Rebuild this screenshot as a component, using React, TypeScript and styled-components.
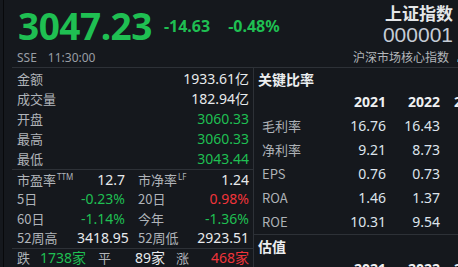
import React from "react";
import styled, { createGlobalStyle } from "styled-components";

const GlobalStyle = createGlobalStyle`
  html, body { margin: 0; padding: 0; background: #15181d; }
  body { font-family: "Noto Sans", "Noto Sans CJK SC", sans-serif; }
  * { box-sizing: border-box; }
`;

const GREEN = "#1fbf52";
const RED = "#f0343a";
const LINE = "#2d3137";

const Page = styled.div`
  width: 458px;
  height: 267px;
  overflow: hidden;
  background: #15181d;
  padding-left: 3px;
`;

const Frame = styled.div`
  height: 100%;
  border-left: 1px solid #08090b;
  padding-left: 8px;
  display: flex;
  flex-direction: column;
`;

const Header = styled.header`
  height: 68px;
  flex: none;
  border-bottom: 1px solid ${LINE};
  display: grid;
  grid-template-columns: 1fr auto;
  grid-template-rows: 48px 1fr;
`;

const PriceRow = styled.div`
  display: flex;
  align-items: center;
  padding: 4px 0 0 6px;
  gap: 12px;
`;

const Price = styled.span`
  font-family: "Noto Sans", sans-serif;
  font-weight: 700;
  font-size: 37px;
  letter-spacing: -0.5px;
  color: ${GREEN};
  line-height: 38px;
`;

const Change = styled.span<{ $gap?: number }>`
  font-weight: 700;
  font-size: 16px;
  line-height: 18px;
  color: ${GREEN};
  margin-left: ${(p) => p.$gap ?? 0}px;
`;

const TitleBlock = styled.div`
  display: flex;
  flex-direction: column;
  align-items: flex-end;
  padding: 3px 5px 0 0;
`;

const IndexName = styled.div`
  font-family: "Noto Sans CJK SC", sans-serif;
  font-weight: 700;
  font-size: 17px;
  line-height: 20px;
  color: #e4e6e8;
`;

const IndexCode = styled.div`
  font-family: "Liberation Sans", sans-serif;
  font-size: 21px;
  line-height: 23px;
  color: #c5ccd6;
`;

const Meta = styled.div`
  font-size: 12px;
  line-height: 14px;
  color: #9a9ea5;
  padding-left: 5px;
  display: flex;
  gap: 11px;
  align-items: center;
`;

const Board = styled.div`
  display: flex;
  align-items: center;
  gap: 7px;
  font-family: "Noto Sans CJK SC", sans-serif;
  font-size: 12px;
  line-height: 14px;
  color: #b3b6ba;
  margin-right: -10px;
  margin-top: -2px;
`;

const Body = styled.div`
  flex: 1;
  display: flex;
  min-height: 0;
`;

const LeftPanel = styled.section`
  width: 242px;
  flex: none;
  border-right: 1px solid ${LINE};
  display: flex;
  flex-direction: column;
`;

const Section = styled.div<{ $rowH: number; $pad: number }>`
  padding: ${(p) => p.$pad}px 4px 0 5px;
  border-bottom: 1px solid ${LINE};
  & > * { height: ${(p) => p.$rowH}px; }
`;

const Row = styled.div`
  display: flex;
  align-items: center;
  justify-content: space-between;
`;

const QuadRow = styled.div`
  display: grid;
  grid-template-columns: 60px 48px 64px 1fr;
  align-items: center;
`;

const Label = styled.span<{ $indent?: number }>`
  font-family: "Noto Sans CJK SC", sans-serif;
  font-size: 13px;
  line-height: 16px;
  color: #b0b4b9;
  white-space: nowrap;
  padding-left: ${(p) => p.$indent ?? 0}px;
`;

const Sup = styled.sup`
  font-size: 8px;
  line-height: 0;
  vertical-align: 5px;
  margin-left: 1px;
  font-family: "Noto Sans", sans-serif;
`;

const Value = styled.span<{ $tone?: "up" | "down" | "flat"; $left?: boolean }>`
  font-family: "Noto Sans", "Noto Sans CJK SC", sans-serif;
  font-size: 14px;
  line-height: 16px;
  text-align: ${(p) => (p.$left ? "left" : "right")};
  white-space: nowrap;
  color: ${(p) => (p.$tone === "down" ? GREEN : p.$tone === "up" ? RED : "#e8eaec")};
`;

const Breadth = styled.div`
  display: grid;
  grid-template-columns: 23px 58px 37px 41px 33px 1fr;
  align-items: center;
  height: 18px;
  padding: 0 4px 0 5px;
`;

const RightPanel = styled.section`
  flex: 1;
  min-width: 0;
  overflow: hidden;
  display: flex;
  flex-direction: column;
`;

const Block = styled.div<{ $divided?: boolean }>`
  padding-left: 8px;
  border-bottom: ${(p) => (p.$divided ? `1px solid ${LINE}` : "none")};
`;

const BlockTitle = styled.div`
  font-family: "Noto Sans CJK SC", sans-serif;
  font-weight: 700;
  font-size: 14px;
  line-height: 18px;
  color: #eceef0;
  height: 22px;
  display: flex;
  align-items: center;
  margin-left: -4px;
`;

const Grid = styled.div<{ $head?: boolean }>`
  display: grid;
  grid-template-columns: 70px 54px 54px 46px;
  height: 24px;
  align-items: center;
  font-size: 14px;
  line-height: 16px;
  font-weight: ${(p) => (p.$head ? 700 : 400)};
  color: ${(p) => (p.$head ? "#eef0f2" : "#dde4ec")};
  white-space: nowrap;
  & > span:not(:first-child) { text-align: right; }
`;

const GridLabel = styled.span`
  font-family: "Noto Sans CJK SC", "Noto Sans", sans-serif;
  font-size: 13px;
  color: #aeb2b7;
`;

const Pencil = () => (
  <svg width="12" height="12" viewBox="0 0 12 12">
    <path d="M1 11 L1.6 8.4 L8.4 1.6 L10.4 3.6 L3.6 10.4 Z" fill="#3ba7dc" />
  </svg>
);

const ratios = [
  { k: "毛利率", v: ["16.76", "16.43", "--"] },
  { k: "净利率", v: ["9.21", "8.73", "--"] },
  { k: "EPS", v: ["0.76", "0.73", "--"] },
  { k: "ROA", v: ["1.46", "1.37", "--"] },
  { k: "ROE", v: ["10.31", "9.54", "--"] },
];

const years = ["2021", "2022", "2023"];

export default function App() {
  return (
    <>
      <GlobalStyle />
      <Page>
        <Frame>
          <Header>
            <PriceRow>
              <Price>3047.23</Price>
              <Change>-14.63</Change>
              <Change $gap={6}>-0.48%</Change>
            </PriceRow>
            <TitleBlock>
              <IndexName>上证指数</IndexName>
              <IndexCode>000001</IndexCode>
            </TitleBlock>
            <Meta>
              <span>SSE</span>
              <span>11:30:00</span>
            </Meta>
            <Board>
              <span>沪深市场核心指数</span>
              <Pencil />
            </Board>
          </Header>
          <Body>
            <LeftPanel>
              <Section $rowH={20} $pad={1}>
                <Row><Label>金额</Label><Value>1933.61亿</Value></Row>
                <Row><Label>成交量</Label><Value>182.94亿</Value></Row>
                <Row><Label>开盘</Label><Value $tone="down">3060.33</Value></Row>
                <Row><Label>最高</Label><Value $tone="down">3060.33</Value></Row>
                <Row><Label>最低</Label><Value $tone="down">3043.44</Value></Row>
              </Section>
              <Section $rowH={19.5} $pad={0}>
                <QuadRow>
                  <Label>市盈率<Sup>TTM</Sup></Label><Value>12.7</Value>
                  <Label $indent={13}>市净率<Sup>LF</Sup></Label><Value>1.24</Value>
                </QuadRow>
                <QuadRow>
                  <Label>5日</Label><Value $tone="down">-0.23%</Value>
                  <Label $indent={13}>20日</Label><Value $tone="up">0.98%</Value>
                </QuadRow>
                <QuadRow>
                  <Label>60日</Label><Value $tone="down">-1.14%</Value>
                  <Label $indent={13}>今年</Label><Value $tone="down">-1.36%</Value>
                </QuadRow>
                <QuadRow>
                  <Label>52周高</Label><Value>3418.95</Value>
                  <Label $indent={13}>52周低</Label><Value>2923.51</Value>
                </QuadRow>
              </Section>
              <Breadth>
                <Label>跌</Label>
                <Value $tone="down" $left>1738家</Value>
                <Label>平</Label>
                <Value $left>89家</Value>
                <Label>涨</Label>
                <Value $tone="up">468家</Value>
              </Breadth>
            </LeftPanel>
            <RightPanel>
              <Block $divided>
                <BlockTitle>关键比率</BlockTitle>
                <Grid $head>
                  <span />
                  {years.map((y) => <span key={y}>{y}</span>)}
                </Grid>
                {ratios.map((r) => (
                  <Grid key={r.k}>
                    <GridLabel>{r.k}</GridLabel>
                    {r.v.map((x, i) => (
                      <span key={i}>{x}</span>
                    ))}
                  </Grid>
                ))}
              </Block>
              <Block>
                <BlockTitle>估值</BlockTitle>
                <Grid $head>
                  <span />
                  {years.map((y) => <span key={y}>{y}</span>)}
                </Grid>
              </Block>
            </RightPanel>
          </Body>
        </Frame>
      </Page>
    </>
  );
}
